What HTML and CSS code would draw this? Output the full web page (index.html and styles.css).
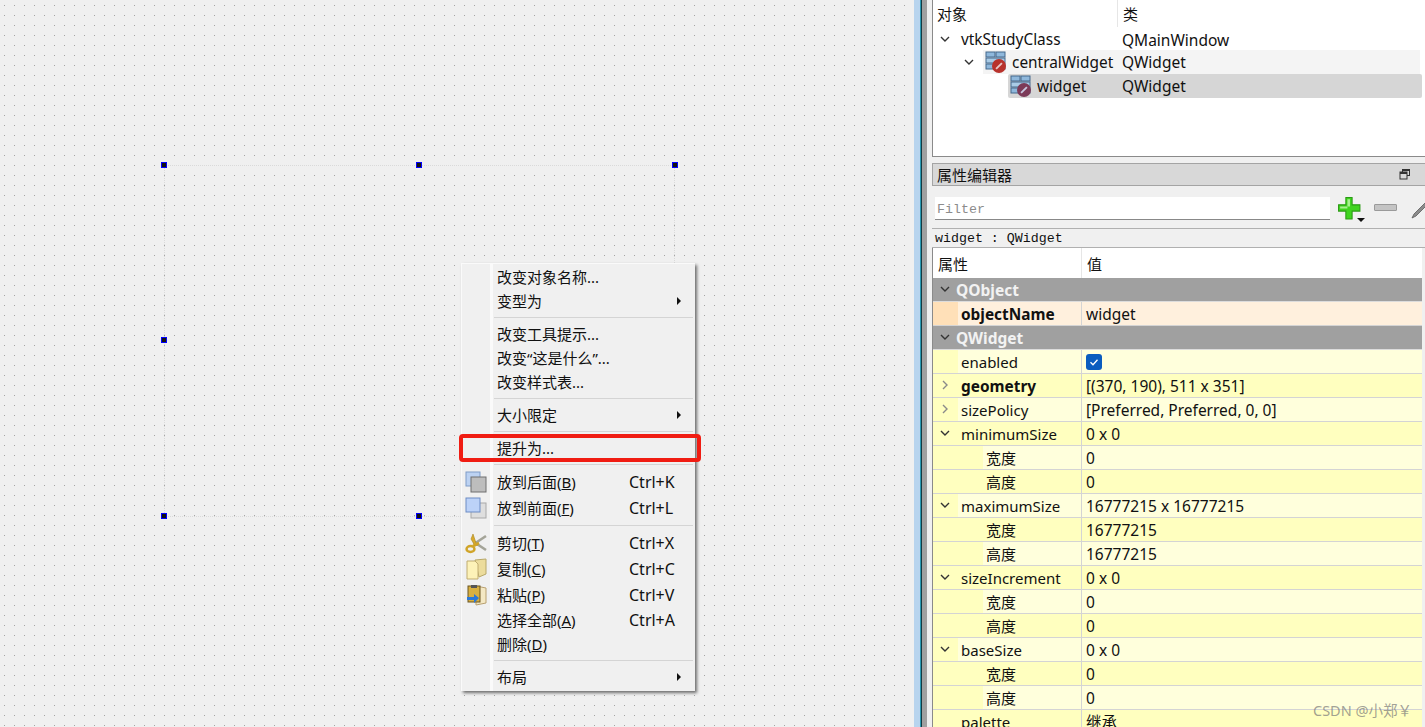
FILE: index.html
```html
<!DOCTYPE html>
<html lang="zh-CN">
<head>
  <meta charset="UTF-8">
  <title>Qt Designer</title>
  <link rel="stylesheet" href="styles.css">
</head>
<body>
  <svg class="defs" width="0" height="0">
    <symbol id="ico-widget" viewBox="0 0 22 22">
      <rect x="1" y="1" width="9" height="5" fill="#8fb8dc" stroke="#44688c"/>
      <rect x="11" y="1" width="9" height="5" fill="#8fb8dc" stroke="#44688c"/>
      <rect x="1" y="7" width="19" height="5" fill="#a9cbe6" stroke="#44688c"/>
      <rect x="1" y="13" width="9" height="5" fill="#8fb8dc" stroke="#44688c"/>
      <rect x="11" y="13" width="9" height="5" fill="#8fb8dc" stroke="#44688c"/>
    </symbol>
    <symbol id="chev-down" viewBox="0 0 10 10">
      <path d="M1 3l4 4 4-4" fill="none" stroke="#333" stroke-width="1.4"/>
    </symbol>
    <symbol id="chev-right" viewBox="0 0 10 10">
      <path d="M3 1l4 4-4 4" fill="none" stroke="#8a8a8a" stroke-width="1.4"/>
    </symbol>
  </svg>

  <div class="app">
    <div class="canvas">
      <div class="form-box">
        <span class="handle h-tl"></span>
        <span class="handle h-tc"></span>
        <span class="handle h-tr"></span>
        <span class="handle h-ml"></span>
        <span class="handle h-bl"></span>
        <span class="handle h-bc"></span>
      </div>

      <div class="menu">
        <div class="item"><span class="label">改变对象名称...</span></div>
        <div class="item"><span class="label">变型为</span><i class="arrow"></i></div>
        <div class="sep"></div>
        <div class="item"><span class="label">改变工具提示...</span></div>
        <div class="item"><span class="label">改变“这是什么”...</span></div>
        <div class="item"><span class="label">改变样式表...</span></div>
        <div class="sep"></div>
        <div class="item"><span class="label">大小限定</span><i class="arrow"></i></div>
        <div class="sep"></div>
        <div class="item"><span class="label">提升为...</span></div>
        <div class="sep"></div>
        <div class="item tall">
          <svg class="mico" viewBox="0 0 22 22">
            <rect x="1" y="1" width="14" height="14" fill="#bcd2f2" stroke="#7f9cc8"/>
            <rect x="6" y="6" width="15" height="15" fill="#bdbdbd" stroke="#6e6e6e"/>
          </svg>
          <span class="label">放到后面(<u>B</u>)</span><span class="key">Ctrl+K</span>
        </div>
        <div class="item tall">
          <svg class="mico" viewBox="0 0 22 22">
            <rect x="6" y="6" width="15" height="15" fill="#dedede" stroke="#a8a8a8"/>
            <rect x="1" y="1" width="14" height="14" fill="#bcd2f8" stroke="#6c8cc4"/>
          </svg>
          <span class="label">放到前面(<u>F</u>)</span><span class="key">Ctrl+L</span>
        </div>
        <div class="sep"></div>
        <div class="item tall">
          <svg class="mico" viewBox="0 0 22 22">
            <path d="M9 12L21 4M9 10l12 8" stroke="#a4a498" stroke-width="2.6" fill="none"/>
            <path d="M8 2l3 9 2 2-3 1-4-7z" fill="#d8aa2c" stroke="#a88420" stroke-width="0.6"/>
            <ellipse cx="5.500" cy="17" rx="4" ry="3" fill="none" stroke="#d0a428" stroke-width="2.4"/>
            <path d="M8 14l6-3" stroke="#d0a428" stroke-width="2.6"/>
          </svg>
          <span class="label">剪切(<u>T</u>)</span><span class="key">Ctrl+X</span>
        </div>
        <div class="item tall">
          <svg class="mico" viewBox="0 0 22 22">
            <path d="M10 2l11-1v15l-7 3z" fill="#ecdc9c" stroke="#b8a868"/>
            <path d="M2 3h8l3 3v15l-11 0z" fill="#fdf2b8" stroke="#c0ac70"/>
          </svg>
          <span class="label">复制(<u>C</u>)</span><span class="key">Ctrl+C</span>
        </div>
        <div class="item tall">
          <svg class="mico" viewBox="0 0 22 22">
            <path d="M11 2l10 2v15l-10 2z" fill="#f4e8c4" stroke="#b8a070"/>
            <rect x="3" y="2" width="12" height="16" fill="#d8b040" stroke="#6a5420"/>
            <rect x="6" y="1" width="6" height="3" fill="#555"/>
            <path d="M2 13h7v-3l5 4-5 5v-3H2z" fill="#2a78d8"/>
          </svg>
          <span class="label">粘贴(<u>P</u>)</span><span class="key">Ctrl+V</span>
        </div>
        <div class="item"><span class="label">选择全部(<u>A</u>)</span><span class="key">Ctrl+A</span></div>
        <div class="item"><span class="label">删除(<u>D</u>)</span></div>
        <div class="sep"></div>
        <div class="item"><span class="label">布局</span><i class="arrow"></i></div>
      </div>

      <div class="red-box"></div>
    </div>

    <div class="splitter">
      <div class="sp-blue"></div>
      <div class="sp-line"></div>
      <div class="sp-grey"></div>
      <div class="sp-light"></div>
    </div>

    <div class="side">
      <div class="tree">
        <div class="tree-head">
          <div class="th-obj">对象</div>
          <div class="th-cls">类</div>
        </div>
        <div class="tree-row first">
          <svg class="chev t-chev-0"><use href="#chev-down"/></svg>
          <span class="t-name t-name-0">vtkStudyClass</span>
          <span class="t-cls">QMainWindow</span>
        </div>
        <div class="tree-row">
          <svg class="chev t-chev-1"><use href="#chev-down"/></svg>
          <div class="t-band t-band-1">
            <span class="obj-ico">
              <svg class="obj-base"><use href="#ico-widget"/></svg>
              <svg class="obj-badge" viewBox="0 0 12 12"><circle cx="6" cy="6" r="6" fill="#b8322c"/><path d="M3.500 8.500l5-5" stroke="#e8c8c8" stroke-width="1.600"/></svg>
            </span>
            <span class="t-name">centralWidget</span>
            <span class="t-cls t-cls-1">QWidget</span>
          </div>
        </div>
        <div class="tree-row">
          <div class="t-band t-band-2">
            <span class="obj-ico">
              <svg class="obj-base"><use href="#ico-widget"/></svg>
              <svg class="obj-badge" viewBox="0 0 12 12"><circle cx="6" cy="6" r="6" fill="#7c3a58"/><path d="M3.500 8.500l5-5" stroke="#c8c8e0" stroke-width="1.600"/></svg>
            </span>
            <span class="t-name">widget</span>
            <span class="t-cls t-cls-2">QWidget</span>
          </div>
        </div>
      </div>

      <div class="dock-title">
        <span>属性编辑器</span>
        <svg class="float-ico" viewBox="0 0 12 12">
          <rect x="3.500" y="1.500" width="7" height="6" fill="none" stroke="#333"/>
          <rect x="1" y="4" width="7" height="7" fill="#d8d8d8" stroke="#333"/>
          <rect x="3.500" y="1" width="7" height="2" fill="#333"/>
          <rect x="1" y="4" width="7" height="2" fill="#333"/>
        </svg>
      </div>

      <div class="toolbar">
        <div class="filter">Filter</div>
        <svg class="tb-plus" viewBox="0 0 24 24">
          <path d="M8.500 1.500h6v7h7.500v6h-7.500v7.500h-6v-7.500h-7v-6h7z" fill="#3fd41f" stroke="#2a9a14"/>
          <path d="M10 3h2.500v7H10zM3 10h7v2H3z" fill="#a8f090"/>
        </svg>
        <i class="tb-drop"></i>
        <div class="tb-minus"></div>
        <svg class="tb-pen" viewBox="0 0 16 24">
          <path d="M16 5L4 17l-2 4 4-2L16 9z" fill="#8c8c8c" stroke="#5a5a5a" stroke-width="0.800"/>
        </svg>
      </div>

      <div class="class-line">widget : QWidget</div>

      <div class="props">
        <div class="p-head">
          <div class="p-head-k">属性</div>
          <div class="p-head-v">值</div>
        </div>

        <div class="row group"><svg class="chev p-chev"><use href="#chev-down"/></svg><span class="k-text">QObject</span></div>
        <div class="row orange"><div class="k"><span class="k-text b">objectName</span></div><div class="v">widget</div></div>
        <div class="row group"><svg class="chev p-chev"><use href="#chev-down"/></svg><span class="k-text">QWidget</span></div>
        <div class="row lite"><div class="k"><span class="k-text">enabled</span></div><div class="v"><span class="check"><svg viewBox="0 0 16 16"><path d="M4.500 8.200l2.500 2.500 4.500-5" fill="none" stroke="#fff" stroke-width="1.300"/></svg></span></div></div>
        <div class="row dark"><div class="k"><svg class="chev p-chev"><use href="#chev-right"/></svg><span class="k-text b">geometry</span></div><div class="v">[(370, 190), 511 x 351]</div></div>
        <div class="row lite"><div class="k"><svg class="chev p-chev"><use href="#chev-right"/></svg><span class="k-text">sizePolicy</span></div><div class="v">[Preferred, Preferred, 0, 0]</div></div>
        <div class="row dark"><div class="k"><svg class="chev p-chev"><use href="#chev-down"/></svg><span class="k-text">minimumSize</span></div><div class="v">0 x 0</div></div>
        <div class="row lite sub"><div class="k"><span class="k-text">宽度</span></div><div class="v">0</div></div>
        <div class="row dark sub"><div class="k"><span class="k-text">高度</span></div><div class="v">0</div></div>
        <div class="row lite"><div class="k"><svg class="chev p-chev"><use href="#chev-down"/></svg><span class="k-text">maximumSize</span></div><div class="v">16777215 x 16777215</div></div>
        <div class="row dark sub"><div class="k"><span class="k-text">宽度</span></div><div class="v">16777215</div></div>
        <div class="row lite sub"><div class="k"><span class="k-text">高度</span></div><div class="v">16777215</div></div>
        <div class="row dark"><div class="k"><svg class="chev p-chev"><use href="#chev-down"/></svg><span class="k-text">sizeIncrement</span></div><div class="v">0 x 0</div></div>
        <div class="row lite sub"><div class="k"><span class="k-text">宽度</span></div><div class="v">0</div></div>
        <div class="row dark sub"><div class="k"><span class="k-text">高度</span></div><div class="v">0</div></div>
        <div class="row lite"><div class="k"><svg class="chev p-chev"><use href="#chev-down"/></svg><span class="k-text">baseSize</span></div><div class="v">0 x 0</div></div>
        <div class="row dark sub"><div class="k"><span class="k-text">宽度</span></div><div class="v">0</div></div>
        <div class="row lite sub"><div class="k"><span class="k-text">高度</span></div><div class="v">0</div></div>
        <div class="row dark"><div class="k"><span class="k-text">palette</span></div><div class="v">继承</div></div>
      </div>
    </div>
  </div>

  <div class="watermark">CSDN @小郑￥</div>
</body>
</html>
```

FILE: styles.css
```css
html, body {
  margin: 0;
  height: 100%;
  overflow: hidden;
}

body {
  font-family: "Noto Sans", "Noto Sans CJK SC", sans-serif;
  font-size: 15px;
  color: #111;
  background: #f0f0f0;
  position: relative;
}

.defs {
  position: absolute;
}

.app {
  display: flex;
  height: 727px;
}

/* form canvas */
.canvas {
  flex: none;
  width: 914px;
  position: relative;
  background-color: #f0f0f0;
  background-image: radial-gradient(circle at 0.5px 0.5px, #a4a4a4 0.5px, transparent 0.7px);
  background-size: 10px 10px;
  background-position: 4px 5px;
}

.form-box {
  position: absolute;
  left: 164px;
  top: 165px;
  width: 509px;
  height: 350px;
  border: 1px dotted #dadada;
}

.handle {
  position: absolute;
  width: 4px;
  height: 4px;
  background: #111;
  border: 1px solid #0000ff;
}

.h-tl { left: -4px; top: -4px; }
.h-tc { left: 251px; top: -4px; }
.h-tr { left: 507px; top: -4px; }
.h-ml { left: -4px; top: 171px; }
.h-bl { left: -4px; top: 347px; }
.h-bc { left: 251px; top: 347px; }

/* context menu */
.menu {
  position: absolute;
  left: 461px;
  top: 263px;
  width: 234px;
  height: 428px;
  box-sizing: border-box;
  padding: 1px 0 0 1px;
  background: linear-gradient(to right, #f0f0f0 28px, #fafafa 28px, #fafafa 31px, #f0f0f0 31px);
  border-top: 1px solid #fafafa;
  border-left: 1px solid #fafafa;
  box-shadow: 2px 2px 3px rgba(0, 0, 0, 0.55);
}

.item {
  display: flex;
  align-items: center;
  height: 24px;
  position: relative;
  padding-left: 34px;
}

.item.tall {
  height: 26px;
}

.label {
  width: 132px;
  white-space: nowrap;
  margin-top: -2px;
}

.key {
  white-space: nowrap;
  font-size: 16px;
  margin-top: -1px;
}

.arrow {
  position: absolute;
  right: 14px;
  top: 8px;
  border-left: 4px solid #111;
  border-top: 4px solid transparent;
  border-bottom: 4px solid transparent;
}

.mico {
  position: absolute;
  left: 2px;
  top: 2px;
  width: 22px;
  height: 22px;
}

.sep {
  height: 1px;
  margin: 4px 2px 4px 31px;
  background: #d4d4d4;
}

.red-box {
  position: absolute;
  left: 459px;
  top: 434px;
  width: 234px;
  height: 20px;
  border: 4px solid #f01c12;
  border-radius: 4px;
}

/* splitter */
.splitter {
  flex: none;
  width: 18px;
  display: flex;
}

.sp-blue { width: 6px; background: #b8d4ee; }
.sp-line { width: 2px; background: linear-gradient(to right, #35c8e8, #0a0a0a); }
.sp-grey { width: 5px; background: #a0a0a0; }
.sp-light { width: 5px; background: #f0f0f0; }

/* right side */
.side {
  flex: 1;
  min-width: 0;
  display: flex;
  flex-direction: column;
}

.tree {
  height: 156px;
  background: #fff;
  border-left: 1px solid #8a8a8a;
  border-bottom: 1px solid #8a8a8a;
  flex: none;
}

.tree-head {
  display: flex;
  height: 27px;
  line-height: 28px;
}

.th-obj {
  width: 185px;
  padding-left: 4px;
  box-sizing: border-box;
  border-right: 1px solid #e6e6e6;
  height: 27px;
}

.th-cls {
  padding-left: 5px;
}

.tree-row {
  height: 24px;
  display: flex;
  align-items: center;
  position: relative;
}

.tree-row.first {
  height: 23px;
  padding-top: 1px;
  margin-bottom: -1px;
}

.chev {
  width: 10px;
  height: 10px;
  flex: none;
}

.t-chev-0 {
  position: absolute;
  left: 7px;
  top: 7px;
}

.t-chev-1 {
  position: absolute;
  left: 31px;
  top: 7px;
}

.t-name {
  white-space: nowrap;
  font-size: 15.400px;
}

.t-name-0 {
  margin-left: 28px;
}

.t-cls {
  position: absolute;
  left: 189px;
  font-size: 15.500px;
}

.t-band {
  position: absolute;
  top: 0;
  bottom: 0;
  display: flex;
  align-items: center;
}

.t-band-1 {
  left: 50px;
  background: #f4f4f4;
  right: 5px;
}

.t-band-2 {
  left: 75px;
  background: #d6d6d6;
  right: 3px;
  border-radius: 2px;
}

.t-cls-1 { left: 139px; }
.t-cls-2 { left: 114px; }

.obj-ico {
  position: relative;
  width: 22px;
  height: 22px;
  margin: 0 5px 0 2px;
  flex: none;
}

.obj-base {
  position: absolute;
  left: 0;
  top: 0;
  width: 22px;
  height: 22px;
}

.obj-badge {
  position: absolute;
  left: 7px;
  top: 8px;
  width: 14px;
  height: 14px;
}

.dock-title {
  flex: none;
  margin-top: 6px;
  height: 21px;
  padding-left: 4px;
  background: #d8d8d8;
  border: 1px solid #a4a4a4;
  border-right: 0;
  display: flex;
  align-items: center;
  position: relative;
}

.float-ico {
  position: absolute;
  left: 466px;
  top: 4px;
  width: 12px;
  height: 12px;
}

.toolbar {
  flex: none;
  height: 42px;
  position: relative;
}

.filter {
  position: absolute;
  left: 3px;
  top: 11px;
  width: 395px;
  height: 23px;
  box-sizing: border-box;
  background: #fff;
  border-bottom: 1px solid #888;
  padding-left: 2px;
  font: 13.300px/25px "Liberation Mono", monospace;
  color: #8c8c8c;
}

.tb-plus {
  position: absolute;
  left: 405px;
  top: 10px;
  width: 25px;
  height: 25px;
}

.tb-drop {
  position: absolute;
  left: 425px;
  top: 32px;
  border-top: 4px solid #111;
  border-left: 4px solid transparent;
  border-right: 4px solid transparent;
}

.tb-minus {
  position: absolute;
  left: 442px;
  top: 18px;
  width: 21px;
  height: 5px;
  background: #c4c4c4;
  border: 1px solid #9a9a9a;
  border-radius: 1px;
}

.tb-pen {
  position: absolute;
  left: 478px;
  top: 11px;
  width: 16px;
  height: 24px;
}

.class-line {
  flex: none;
  height: 18px;
  padding-left: 3px;
  border-top: 1px solid #b0b0b0;
  border-bottom: 1px solid #b0b0b0;
  font: 13.300px/19px "Liberation Mono", monospace;
}

.props {
  flex: 1;
  min-height: 0;
  margin-right: 3px;
  border-left: 1px solid #8a8a8a;
  background: #fff;
}

.p-head {
  display: flex;
  height: 30px;
  line-height: 32px;
}

.p-head-k {
  width: 149px;
  padding-left: 5px;
  box-sizing: border-box;
  border-right: 1px solid #e6e6e6;
}

.p-head-v {
  padding-left: 5px;
}

.row {
  display: flex;
  align-items: center;
  height: 24px;
  box-sizing: border-box;
  border-bottom: 1px solid #d4d4d4;
  position: relative;
}

.k {
  width: 149px;
  height: 100%;
  box-sizing: border-box;
  display: flex;
  align-items: center;
  border-right: 1px solid #d4d4d4;
  flex: none;
  background: linear-gradient(to right, #ffffbf 25px, var(--row) 25px);
}

.sub .k {
  background: linear-gradient(to right, #ffffbf 50px, var(--row) 50px);
}

.k-text {
  margin-left: 28px;
  white-space: nowrap;
}

.sub .k-text {
  margin-left: 53px;
}

.b {
  font-weight: 700;
  font-size: 15.400px;
  padding-top: 2px;
}

.v {
  padding-left: 4px;
  white-space: nowrap;
  display: flex;
  align-items: center;
  font-size: 15.500px;
}

.lite {
  --row: #ffffdc;
  background: #ffffdc;
}

.dark {
  --row: #ffffbf;
  background: #ffffbf;
}

.orange {
  --row: #fff0dd;
  background: #fff0dd;
}

.orange .k {
  background: linear-gradient(to right, #ffe0b8 25px, var(--row) 25px);
}

.group {
  background: #a0a0a0;
  border-bottom-color: #dcdcdc;
  color: #f2f2f2;
  font-weight: 700;
  font-size: 15.500px;
}

.group .k-text {
  margin-left: 23px;
}

.p-chev {
  position: absolute;
  left: 7px;
  top: 6px;
}

.check {
  width: 16px;
  height: 16px;
  background: #0a5cbf;
  border-radius: 3px;
  display: block;
}

.check svg {
  display: block;
}

.watermark {
  position: absolute;
  left: 1313px;
  top: 700px;
  font-size: 14.500px;
  line-height: 20px;
  color: rgba(120, 120, 120, 0.7);
  white-space: nowrap;
}
```
